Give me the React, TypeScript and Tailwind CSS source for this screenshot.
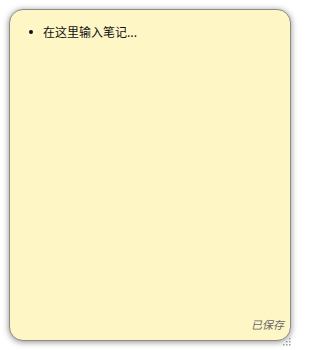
import React from "react";

function Grip() {
  const dots = [
    [6, 0],
    [3, 3],
    [6, 3],
    [0, 6],
    [3, 6],
    [6, 6],
  ];
  return (
    <svg width="9" height="9" viewBox="0 0 9 9" className="absolute right-[8px] bottom-[3px]">
      {dots.map(([x, y], i) => (
        <rect key={i} x={x} y={y} width="1.5" height="1.5" fill="#9a9a9a" />
      ))}
    </svg>
  );
}

export default function App() {
  return (
    <div className="relative h-[350px] w-[300px] bg-white p-[9px] font-['Noto_Sans_CJK_SC','Noto_Sans',sans-serif]">
      <div className="flex h-[332px] w-[282px] flex-col justify-between rounded-[14px] border border-[#8c8c8c] bg-[#fff6c6] pl-[19px] pr-[6px] pt-[13px] pb-[9px] shadow-[0_1px_6px_rgba(0,0,0,0.45)]">
        <div className="flex items-center text-[12px] leading-[18px] text-[#111]">
          <span className="mr-[10px] h-[4px] w-[4px] rounded-full bg-[#111]" />
          <span>在这里输入笔记...</span>
        </div>
        <div className="self-end text-[11px] italic leading-[14px] text-[#666]">已保存</div>
      </div>
      <Grip />
    </div>
  );
}
